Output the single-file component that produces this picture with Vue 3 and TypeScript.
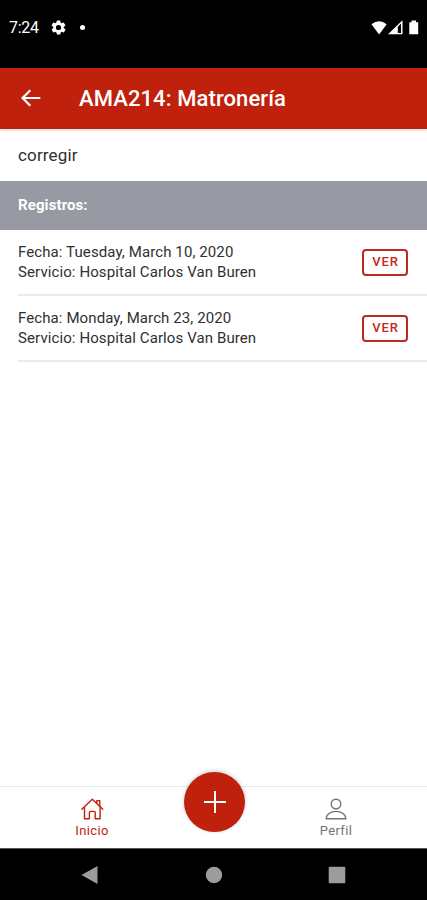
<script setup lang="ts">
interface Registro {
  fecha: string
  servicio: string
}

const registros: Registro[] = [
  { fecha: 'Tuesday, March 10, 2020', servicio: 'Hospital Carlos Van Buren' },
  { fecha: 'Monday, March 23, 2020', servicio: 'Hospital Carlos Van Buren' },
]
</script>

<template>
  <div class="screen">
    <div class="status">
      <span class="clock">7:24</span>
      <svg class="gear" viewBox="0 0 24 24" width="17" height="17">
        <path fill="#fff" fill-rule="evenodd" d="M19.4 13a7.8 7.8 0 0 0 0-2l2.1-1.6a.5.5 0 0 0 .1-.7l-2-3.4a.5.5 0 0 0-.6-.2l-2.5 1a7.3 7.3 0 0 0-1.7-1L14.5 2.4A.5.5 0 0 0 14 2h-4a.5.5 0 0 0-.5.4L9.1 5.1a7.7 7.7 0 0 0-1.700 1l-2.500-1a.5.5 0 0 0-.6.2l-2 3.400a.5.5 0 0 0 .1.7L4.600 11a7.900 7.900 0 0 0 0 2l-2.100 1.600a.5.5 0 0 0-.1.7l2 3.400c.1.2.4.3.6.2l2.500-1a7.300 7.300 0 0 0 1.700 1l.4 2.700c0 .2.200.4.5.4h4c.200 0 .5-.2.500-.4l.4-2.700a7.700 7.700 0 0 0 1.700-1l2.500 1c.200.1.5 0 .6-.2l2-3.400a.5.5 0 0 0-.1-.7zM12 15.700a3.700 3.700 0 1 1 0-7.400 3.700 3.700 0 0 1 0 7.400z" />
      </svg>
      <span class="dot"></span>
      <svg class="signals" viewBox="0 0 50 16" width="50" height="16">
        <path fill="#fff" d="M0.500 4.200Q8 -1.800 15.700 4.200L8.100 14.500z" />
        <path fill="#fff" fill-rule="evenodd" d="M17 14.300L31.500 0.300V14.300zM26.800 6.800V13H30V3.500z" />
        <path fill="#fff" d="M38.300 2.200h2.200V.6h4.500v1.600h2.200v12h-8.900z" />
      </svg>
    </div>

    <header class="toolbar">
      <svg class="back" viewBox="0 0 20 18" width="20" height="18">
        <path d="M19.300 9H1.500M9.300 1.200L1.500 9l7.800 7.800" fill="none" stroke="#fff" stroke-width="2.200" />
      </svg>
      <h1>AMA214: Matronería</h1>
    </header>

    <main>
      <div class="note"><span>corregir</span></div>
      <div class="divider">Registros:</div>
      <div v-for="r in registros" :key="r.fecha" class="item">
        <div class="inner">
          <div class="lines">
            <p class="fecha">Fecha: {{ r.fecha }}</p>
            <p class="servicio">Servicio: {{ r.servicio }}</p>
          </div>
          <button type="button" class="ver">VER</button>
        </div>
      </div>
    </main>

    <nav class="tabs">
      <a class="tab active">
        <svg viewBox="0 0 24 24" width="24" height="24">
          <g fill="none" stroke="#bf210d" stroke-width="1.400" stroke-linejoin="round" stroke-linecap="round">
            <path d="M1.800 12.300L12.300 2.300l10.500 10" />
            <path d="M4.500 10.500v11.200h4.900v-6.300q0-1 1-1h3.800q1 0 1 1v6.300h4.900V10.500" />
            <path d="M16.800 6V3.600h3v5.200" />
          </g>
        </svg>
        <span>Inicio</span>
      </a>
      <a class="tab">
        <svg viewBox="0 0 24 24" width="24" height="24">
          <g fill="none" stroke="#747474" stroke-width="1.400" stroke-linejoin="round">
            <circle cx="12" cy="7" r="4.800" />
            <path d="M2.200 21.700c.2-4.700 4.700-7.300 9.800-7.300s9.600 2.600 9.800 7.300z" />
          </g>
        </svg>
        <span>Perfil</span>
      </a>
      <button type="button" class="fab" aria-label="Agregar">
        <svg viewBox="0 0 22 22" width="22" height="22">
          <path d="M11 0v22M0 11h22" stroke="#fff" stroke-width="2" />
        </svg>
      </button>
    </nav>

    <div class="system">
      <svg viewBox="0 0 18 20" width="18" height="20"><path d="M.5 10L16.500 1v18z" fill="#9c9c9c" /></svg>
      <svg viewBox="0 0 18 18" width="18" height="18"><circle cx="9" cy="9" r="8.200" fill="#9c9c9c" /></svg>
      <svg viewBox="0 0 18 18" width="18" height="18"><rect x=".7" y=".7" width="16.600" height="16.600" rx="1" fill="#9c9c9c" /></svg>
    </div>
  </div>
</template>

<style>
body {
  margin: 0;
}
</style>

<style scoped>
.screen {
  width: 427px;
  height: 900px;
  display: flex;
  flex-direction: column;
  background: #fff;
  overflow: hidden;
  font-family: Roboto, sans-serif;
  color: #303030;
}
.status {
  height: 68px;
  flex: none;
  box-sizing: border-box;
  padding: 0 7px 13px 9px;
  display: flex;
  align-items: center;
  background: #000;
  color: #fff;
}
.clock {
  width: 41px;
  font-size: 16px;
  letter-spacing: -0.3px;
  line-height: 20px;
}
.dot {
  width: 5px;
  height: 5px;
  margin-left: 13px;
  border-radius: 50%;
  background: #fff;
}
.signals {
  margin-left: auto;
  margin-right: -1px;
}
.toolbar {
  height: 61px;
  flex: none;
  display: flex;
  align-items: center;
  background: #bf210d;
  box-shadow: 0 1px 3px rgba(0, 0, 0, 0.2);
  color: #fff;
  z-index: 1;
}
.back {
  margin-left: 21px;
  margin-bottom: 1px;
}
h1 {
  margin: 0 0 0 38px;
  font-size: 22px;
  line-height: 28px;
  font-weight: 500;
  letter-spacing: 0.1px;
}
main {
  flex: 1;
}
.note {
  height: 52px;
  box-sizing: border-box;
  padding: 0 0 1px 18px;
  display: flex;
  align-items: center;
  font-size: 17px;
  letter-spacing: 0.15px;
}
.divider {
  height: 49px;
  box-sizing: border-box;
  padding: 0 0 1px 18px;
  display: flex;
  align-items: center;
  background: #979aa2;
  color: #fff;
  font-size: 15px;
  font-weight: 700;
  letter-spacing: 0.1px;
}
.item {
  padding-left: 18px;
}
.inner {
  height: 66px;
  box-sizing: border-box;
  padding-right: 19px;
  display: flex;
  align-items: center;
  justify-content: space-between;
  border-bottom: 2px solid #ebebeb;
}
.lines {
  padding-top: 1px;
}
p {
  margin: 0;
  font-size: 15px;
  line-height: 20px;
  letter-spacing: 0.1px;
  white-space: nowrap;
}
.fecha {
  line-height: 19px;
}
.ver {
  width: 46px;
  height: 27px;
  padding: 0 0 0 1px;
  border: 2px solid #bf2a20;
  border-radius: 4px;
  background: #fff;
  color: #bf2a20;
  font: 500 13px/20px Roboto, sans-serif;
  letter-spacing: 0.9px;
}
.tabs {
  height: 62px;
  flex: none;
  box-sizing: border-box;
  position: relative;
  display: flex;
  justify-content: center;
  border-top: 1px solid #e9e9e9;
}
.tab {
  width: 244px;
  flex: none;
  display: flex;
  flex-direction: column;
  align-items: center;
  padding-top: 10px;
  color: #747474;
  font-size: 13px;
  line-height: 17px;
  letter-spacing: 0.35px;
}
.tab.active {
  color: #bf210d;
}
.tab span {
  margin: 1px 0 0 1px;
}
.fab {
  position: absolute;
  left: 184px;
  top: -15px;
  width: 61px;
  height: 60px;
  padding: 0;
  display: flex;
  align-items: center;
  justify-content: center;
  border: 0;
  border-radius: 50%;
  background: #bf210d;
  box-shadow: 0 -1px 4px rgba(0, 0, 0, 0.2);
}
.system {
  height: 52px;
  flex: none;
  box-sizing: border-box;
  padding: 0 81px 0 81px;
  display: flex;
  align-items: center;
  justify-content: space-between;
  background: #000;
  border-top: 1px solid #555;
}
</style>
